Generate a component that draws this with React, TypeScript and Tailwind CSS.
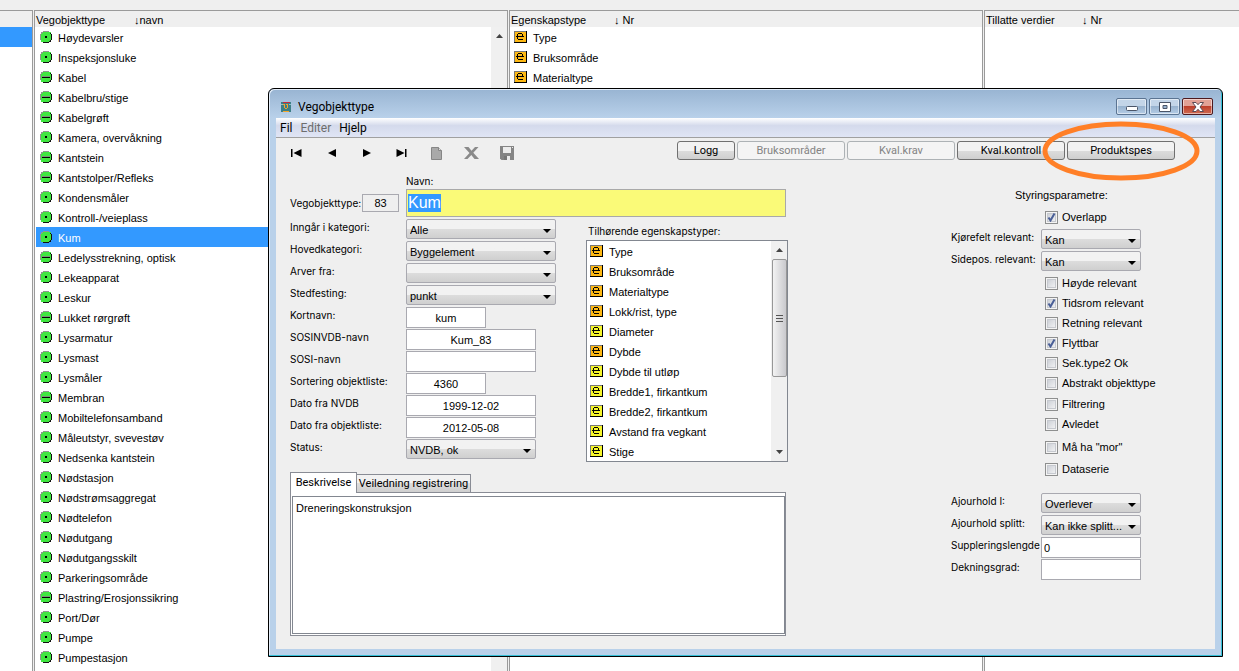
import { useEffect, useRef } from 'react'
import type { ReactNode } from 'react'

type ObjectKind = 'point' | 'line'

const objectTypes: { name: string; kind: ObjectKind }[] = [
  { name: 'Høydevarsler', kind: 'point' },
  { name: 'Inspeksjonsluke', kind: 'point' },
  { name: 'Kabel', kind: 'line' },
  { name: 'Kabelbru/stige', kind: 'line' },
  { name: 'Kabelgrøft', kind: 'line' },
  { name: 'Kamera, overvåkning', kind: 'point' },
  { name: 'Kantstein', kind: 'line' },
  { name: 'Kantstolper/Refleks', kind: 'line' },
  { name: 'Kondensmåler', kind: 'point' },
  { name: 'Kontroll-/veieplass', kind: 'point' },
  { name: 'Kum', kind: 'point' },
  { name: 'Ledelysstrekning, optisk', kind: 'line' },
  { name: 'Lekeapparat', kind: 'point' },
  { name: 'Leskur', kind: 'point' },
  { name: 'Lukket rørgrøft', kind: 'line' },
  { name: 'Lysarmatur', kind: 'point' },
  { name: 'Lysmast', kind: 'point' },
  { name: 'Lysmåler', kind: 'point' },
  { name: 'Membran', kind: 'line' },
  { name: 'Mobiltelefonsamband', kind: 'point' },
  { name: 'Måleutstyr, svevestøv', kind: 'point' },
  { name: 'Nedsenka kantstein', kind: 'point' },
  { name: 'Nødstasjon', kind: 'point' },
  { name: 'Nødstrømsaggregat', kind: 'point' },
  { name: 'Nødtelefon', kind: 'point' },
  { name: 'Nødutgang', kind: 'point' },
  { name: 'Nødutgangsskilt', kind: 'point' },
  { name: 'Parkeringsområde', kind: 'point' },
  { name: 'Plastring/Erosjonssikring', kind: 'line' },
  { name: 'Port/Dør', kind: 'point' },
  { name: 'Pumpe', kind: 'point' },
  { name: 'Pumpestasjon', kind: 'point' },
]

const properties = [
  { name: 'Type', color: '#fdb813' },
  { name: 'Bruksområde', color: '#fdb813' },
  { name: 'Materialtype', color: '#fdb813' },
  { name: 'Lokk/rist, type', color: '#fdb813' },
  { name: 'Diameter', color: '#f5f52a' },
  { name: 'Dybde', color: '#fdb813' },
  { name: 'Dybde til utløp', color: '#f5f52a' },
  { name: 'Bredde1, firkantkum', color: '#f5f52a' },
  { name: 'Bredde2, firkantkum', color: '#f5f52a' },
  { name: 'Avstand fra vegkant', color: '#f5f52a' },
  { name: 'Stige', color: '#f5f52a' },
]

function KindIcon({ kind }: { kind: ObjectKind }) {
  return (
    <svg width="12" height="12" viewBox="0 0 12 12" shapeRendering="crispEdges">
      <path d="M3 0h6v1h2v2h1v6h-1v2H9v1H3v-1H1V9H0V3h1V1h2z" fill="#3fe63f" />
      <path d="M3 0h6v1H3zM1 1h2v1H1zM1 2h1v1H1zM0 3h1v6H0z" fill="#8f968f" />
      <path d="M10 2h1v1h-1zM11 3h1v6h-1zM10 9h1v2h-1zM9 10h1v1H9zM3 11h6v1H3z" fill="#111" />
      {kind === 'point' ? (
        <path d="M5 5h2v2H5z" fill="#000" />
      ) : (
        <>
          <path d="M2 5h8v1H2z" fill="#7d8f7d" />
          <path d="M2 6h8v1H2z" fill="#000" />
        </>
      )}
    </svg>
  )
}

function PropertyIcon({ color }: { color: string }) {
  return (
    <svg width="13" height="12" viewBox="0 0 13 12" shapeRendering="crispEdges">
      <path d="M0 0h13v12H0z" fill="#777" />
      <path d="M12 0h1v12H0v-1h12z" fill="#000" />
      <path d="M1 1h11v10H1z" fill={color} />
      <path d="M4 2h4v1H4zM3 3h1v5H3zM8 3h1v2H8zM2 5h8v1H2zM4 8h5v1H4z" fill="#000" />
    </svg>
  )
}

function PropertyList({ items }: { items: typeof properties }) {
  return (
    <ul className="min-w-0 flex-1">
      {items.map((item) => (
        <li key={item.name} className="flex h-5 items-center gap-1.5 pl-[3px] leading-4">
          <PropertyIcon color={item.color} />
          <span className="pt-0.5">{item.name}</span>
        </li>
      ))}
    </ul>
  )
}

function ListColumn({ title, titleWidth, sort, edge = 'border-x', children }: {
  title: string
  titleWidth: string
  sort: string
  edge?: string
  children?: ReactNode
}) {
  return (
    <section className={`${edge} flex min-w-0 flex-col border-t border-[#9a9a9a] bg-white`}>
      <h2 className="flex h-4 bg-[#efefef] pl-px leading-[18px] whitespace-nowrap">
        <span className={titleWidth}>{title}</span>
        <span>{sort}</span>
      </h2>
      {children}
    </section>
  )
}

function ArrowUp() {
  return (
    <svg width="7" height="4" viewBox="0 0 7 4">
      <path d="M3.500 0L7 4H0z" fill="#444" />
    </svg>
  )
}

function Field({ id, label, labelWidth, children }: {
  id: string
  label: string
  labelWidth: string
  children: ReactNode
}) {
  return (
    <div className="flex h-[22px] items-start">
      <label
        htmlFor={id}
        className={`${labelWidth} shrink-0 font-[Inter,sans-serif] text-[10px] leading-4 whitespace-nowrap`}
      >
        {label}
      </label>
      {children}
    </div>
  )
}

function Select({ id, value, width }: { id: string; value: string; width: string }) {
  return (
    <span className={`${width} grid items-center`}>
      <select
        id={id}
        defaultValue={value}
        className="col-start-1 row-start-1 h-5 w-full appearance-none rounded-[2px] border border-[#a9a9b0] bg-linear-to-b from-[#f2f2f2] from-50% via-[#dddddd] via-50% to-[#cfcfcf] pt-0.5 pr-4 pl-[3px] leading-4 outline-none"
      >
        <option>{value}</option>
      </select>
      <svg
        className="pointer-events-none col-start-1 row-start-1 mt-1 mr-[5px] justify-self-end"
        width="8"
        height="4"
        viewBox="0 0 8 4"
      >
        <path d="M0 0h8L4 4z" fill="#000" />
      </svg>
    </span>
  )
}

function TextField({ id, value, className }: { id: string; value: string; className: string }) {
  return (
    <input
      id={id}
      type="text"
      defaultValue={value}
      className={`${className} h-[21px] border border-[#a9a9b0] bg-white px-0.5 outline-none`}
    />
  )
}

function CheckRow({ label, checked = false, height = 'h-5' }: { label: string; checked?: boolean; height?: string }) {
  return (
    <label className={`${height} ml-[94px] flex items-center gap-1 whitespace-nowrap`}>
      <span className="grid place-items-center">
        <input
          type="checkbox"
          defaultChecked={checked}
          className="peer col-start-1 row-start-1 size-[13px] appearance-none border border-[#8e8f8f] bg-linear-to-br from-[#c4c8d0] to-[#fafafa] shadow-[inset_0_0_0_1px_#f4f4f4,inset_0_0_0_2px_#c6c9cf]"
        />
        <svg
          className="pointer-events-none col-start-1 row-start-1 hidden peer-checked:block"
          width="9"
          height="9"
          viewBox="0 0 9 9"
        >
          <path d="M1.500 4.500L3.500 7.500L7.500 0.500" fill="none" stroke="#4a5f97" strokeWidth="2" />
        </svg>
      </span>
      <span>{label}</span>
    </label>
  )
}

function ToolButton({ label, children }: { label: string; children: ReactNode }) {
  return (
    <button type="button" aria-label={label} className="flex h-6 w-[35px] items-center justify-center">
      {children}
    </button>
  )
}

const buttonBase = 'h-[19px] rounded-[3px] border font-[Roboto,sans-serif] text-[11px] leading-4'
const buttonOn = 'border-[#707070] bg-linear-to-b from-[#f2f2f2] from-50% via-[#dddddd] via-50% to-[#cfcfcf]'
const buttonOff = 'border-[#adb2b5] bg-[#f4f4f4] text-[#838383]'

function TitleBar() {
  const frame = 'flex h-[17px] w-[31px] items-center justify-center rounded-[2px] border shadow-[inset_0_0_0_1px_rgba(255,255,255,0.5)]'
  const blue = 'border-[#5b7492] bg-linear-to-b from-[#c3d5e8] from-50% via-[#98b3cf] via-50% to-[#b5cde6]'
  return (
    <header className="flex h-[29px] items-start justify-between pr-0.5 pl-[5px]">
      <div className="flex items-center gap-[7px] pt-2">
        <svg width="10" height="10" viewBox="0 0 10 10" shapeRendering="crispEdges">
          <path d="M0 0h10v10H0z" fill="#3d7f86" />
          <path d="M2 0h7v1H2z" fill="#c8283c" />
          <path d="M0 2h2v1H0zM8 2h2v1H8z" fill="#8fc0ca" />
          <path d="M2 2h2v1H2zM3 3h1v3H3zM4 6h2v1H4zM6 3h1v3H6zM5 2h2v1H5zM2 9h6v1H2z" fill="#f5a52a" />
        </svg>
        <h1 className="font-[Roboto,sans-serif] text-xs leading-5">Vegobjekttype</h1>
      </div>
      <div className="flex gap-0.5 pt-[9px]">
        <button type="button" aria-label="Minimer" className={`${frame} ${blue}`}>
          <svg width="12" height="11" viewBox="0 0 12 11">
            <rect x="0.500" y="5.500" width="11" height="4" rx="1" fill="#fff" stroke="#4a5568" />
          </svg>
        </button>
        <button type="button" aria-label="Maksimer" className={`${frame} ${blue}`}>
          <svg width="12" height="10" viewBox="0 0 12 10">
            <path d="M.5.500h11v9H.500zM4 3.500h4v3H4z" fill="#fff" fillRule="evenodd" stroke="#4a5568" />
          </svg>
        </button>
        <button
          type="button"
          aria-label="Lukk"
          className={`${frame} border-[#4d1a1f] bg-linear-to-b from-[#e2a196] from-45% via-[#bc3a28] via-45% to-[#d06a50]`}
        >
          <svg width="12" height="10" viewBox="0 0 12 10">
            <path
              d="M.5.500h3.500L6 2.700L8 .5h3.500L8 5l3.500 4.500H8L6 7.300L4 9.500H.5L4 5z"
              fill="#fff"
              stroke="#5a4a55"
            />
          </svg>
        </button>
      </div>
    </header>
  )
}

function Toolbar() {
  return (
    <div className="flex items-start justify-between pt-[3px] pr-10 pl-[3px]">
      <div className="flex">
        <ToolButton label="Første">
          <svg width="11" height="8" viewBox="0 0 11 8">
            <path d="M0 0h1.500v8H0zM10.500 0v8L2.500 4z" />
          </svg>
        </ToolButton>
        <ToolButton label="Forrige">
          <svg width="8" height="8" viewBox="0 0 8 8">
            <path d="M8 0v8L0 4z" />
          </svg>
        </ToolButton>
        <ToolButton label="Neste">
          <svg width="8" height="8" viewBox="0 0 8 8">
            <path d="M0 0v8l8-4z" />
          </svg>
        </ToolButton>
        <ToolButton label="Siste">
          <svg width="11" height="8" viewBox="0 0 11 8">
            <path d="M9 0h1.500v8H9zM.5 0v8l8-4z" />
          </svg>
        </ToolButton>
        <ToolButton label="Ny">
          <svg width="11" height="13" viewBox="0 0 11 13">
            <path d="M.5.500h7l3 3v9H.500z" fill="#a9a9a9" stroke="#868686" />
            <path d="M7.500.5v3h3" fill="#ddd" stroke="#868686" />
          </svg>
        </ToolButton>
        <ToolButton label="Slett">
          <svg width="15" height="12" viewBox="0 0 15 12">
            <path d="M0 0h4.500l3 3.700L11 0h3.500L9.300 5.700L15 12h-4.500L7.300 8L3.500 12H0l5.500-6z" fill="#8a8a8a" />
          </svg>
        </ToolButton>
        <ToolButton label="Lagre">
          <svg width="14" height="14" viewBox="0 0 14 14">
            <path d="M0 0h14v14H1.500L0 12.500z" fill="#858585" />
            <path d="M3 1h8v6H3zM4 10h6v4H4z" fill="#ececec" />
            <path d="M4 10h3v4H4z" fill="#777" />
            <path d="M12 1h1v1h-1z" fill="#ececec" />
          </svg>
        </ToolButton>
      </div>
      <div className="flex gap-0.5">
        <button type="button" className={`${buttonBase} ${buttonOn} w-[58px]`}>Logg</button>
        <button type="button" disabled className={`${buttonBase} ${buttonOff} w-[108px]`}>Bruksområder</button>
        <button type="button" disabled className={`${buttonBase} ${buttonOff} w-[108px]`}>Kval.krav</button>
        <button type="button" className={`${buttonBase} ${buttonOn} w-[108px]`}>Kval.kontroll</button>
        <div className="relative flex">
          <button type="button" className={`${buttonBase} ${buttonOn} w-[108px]`}>Produktspes</button>
          <svg
            className="pointer-events-none absolute top-1/2 left-1/2 max-w-none -translate-1/2"
            width="158"
            height="60"
            viewBox="0 0 158 60"
          >
            <ellipse cx="79" cy="30" rx="76" ry="27" fill="none" stroke="#ff7f27" strokeWidth="5" />
          </svg>
        </div>
      </div>
    </div>
  )
}

function ObjectForm() {
  const nameRef = useRef<HTMLInputElement>(null)

  useEffect(() => {
    nameRef.current?.focus()
    nameRef.current?.select()
  }, [])

  const label = 'w-[116px]'

  return (
    <div className="w-[498px] shrink-0 pt-2">
      <label htmlFor="navn" className="ml-[116px] block font-[Inter,sans-serif] text-[10px] leading-4">
        Navn:
      </label>
      <div className="flex h-7 items-center pr-0.5">
        <label htmlFor="nummer" className="w-[72px] font-[Inter,sans-serif] text-[10px] whitespace-nowrap">
          Vegobjekttype:
        </label>
        <input
          id="nummer"
          type="text"
          readOnly
          defaultValue="83"
          className="mr-[7px] h-[18px] w-[37px] border border-[#a9a9b0] text-center"
        />
        <input
          id="navn"
          ref={nameRef}
          type="text"
          defaultValue="Kum"
          className="h-7 min-w-0 flex-1 border border-[#a9a9a9] bg-[#fafa78] px-px text-base leading-6 outline-none selection:bg-[#3399ff] selection:text-white"
        />
      </div>

      <div className="mt-0.5 flex justify-between">
        <div>
          <Field id="kategori" label="Inngår i kategori:" labelWidth={label}>
            <Select id="kategori" value="Alle" width="w-[150px]" />
          </Field>
          <Field id="hoved" label="Hovedkategori:" labelWidth={label}>
            <Select id="hoved" value="Byggelement" width="w-[150px]" />
          </Field>
          <Field id="arver" label="Arver fra:" labelWidth={label}>
            <Select id="arver" value="" width="w-[150px]" />
          </Field>
          <Field id="sted" label="Stedfesting:" labelWidth={label}>
            <Select id="sted" value="punkt" width="w-[150px]" />
          </Field>
          <Field id="kort" label="Kortnavn:" labelWidth={label}>
            <TextField id="kort" value="kum" className="w-20 text-center" />
          </Field>
          <Field id="sosinvdb" label="SOSINVDB-navn" labelWidth={label}>
            <TextField id="sosinvdb" value="Kum_83" className="w-[130px] text-center" />
          </Field>
          <Field id="sosi" label="SOSI-navn" labelWidth={label}>
            <TextField id="sosi" value="" className="w-[130px] text-center" />
          </Field>
          <Field id="sortering" label="Sortering objektliste:" labelWidth={label}>
            <TextField id="sortering" value="4360" className="w-20 text-center" />
          </Field>
          <Field id="nvdb" label="Dato fra NVDB" labelWidth={label}>
            <TextField id="nvdb" value="1999-12-02" className="w-[130px] text-center" />
          </Field>
          <Field id="dato" label="Dato fra objektliste:" labelWidth={label}>
            <TextField id="dato" value="2012-05-08" className="w-[130px] text-center" />
          </Field>
          <Field id="status" label="Status:" labelWidth={label}>
            <Select id="status" value="NVDB, ok" width="w-[130px]" />
          </Field>
        </div>

        <div className="w-[202px]">
          <h2 className="pt-1 pb-px pl-0.5 font-[Inter,sans-serif] text-[10px] leading-4">
            Tilhørende egenskapstyper:
          </h2>
          <div className="flex border border-[#828790] bg-white">
            <PropertyList items={properties} />
            <div className="flex w-4 flex-col items-center bg-[#f0f0f0]">
              <div className="flex h-[18px] items-center">
                <ArrowUp />
              </div>
              <div className="flex h-[118px] w-[15px] flex-col items-center justify-center gap-0.5 rounded-[2px] border border-[#979797] bg-linear-to-r from-[#f3f3f3] to-[#c9c9cd]">
                <div className="h-px w-[7px] bg-[#555]" />
                <div className="h-px w-[7px] bg-[#555]" />
                <div className="h-px w-[7px] bg-[#555]" />
              </div>
              <div className="mt-auto flex h-[18px] rotate-180 items-center">
                <ArrowUp />
              </div>
            </div>
          </div>
        </div>
      </div>

      <div className="mt-2.5 mr-0.5">
        <div role="tablist" className="flex items-end font-[Roboto,sans-serif] text-[11px] leading-4">
          <button
            type="button"
            role="tab"
            aria-selected="true"
            className="relative z-10 -mb-px h-[21px] w-[67px] border border-b-0 border-[#898c95] bg-white"
          >
            Beskrivelse
          </button>
          <button
            type="button"
            role="tab"
            aria-selected="false"
            className="h-[18px] w-[114px] border border-b-0 border-l-0 border-[#898c95] bg-linear-to-b from-[#f2f2f2] from-50% via-[#dddddd] via-50% to-[#cfcfcf] whitespace-nowrap"
          >
            Veiledning registrering
          </button>
        </div>
        <div className="border border-[#898c95] bg-white pt-[3px] pb-px pl-px">
          <textarea
            aria-label="Beskrivelse"
            defaultValue="Dreneringskonstruksjon"
            className="block h-[138px] w-full resize-none border border-[#828790] px-[3px] py-[3px] leading-4 outline-none"
          />
        </div>
      </div>
    </div>
  )
}

function ControlParameters() {
  const label = 'w-[90px]'
  return (
    <div className="w-[224px] shrink-0 pt-[22px]">
      <h2 className="ml-16 leading-4">Styringsparametre:</h2>
      <div className="mt-1 mb-0.5">
        <CheckRow label="Overlapp" checked />
      </div>
      <Field id="kjorefelt" label="Kjørefelt relevant:" labelWidth={label}>
        <Select id="kjorefelt" value="Kan" width="w-[100px]" />
      </Field>
      <Field id="sidepos" label="Sidepos. relevant:" labelWidth={label}>
        <Select id="sidepos" value="Kan" width="w-[100px]" />
      </Field>
      <CheckRow label="Høyde relevant" />
      <CheckRow label="Tidsrom relevant" checked />
      <CheckRow label="Retning relevant" />
      <CheckRow label="Flyttbar" checked />
      <CheckRow label="Sek.type2 Ok" />
      <CheckRow label="Abstrakt objekttype" />
      <div className="mt-px mb-0.5">
        <CheckRow label="Filtrering" />
        <CheckRow label="Avledet" />
      </div>
      <CheckRow label={'Må ha "mor"'} height="h-[22px]" />
      <CheckRow label="Dataserie" height="h-[22px]" />
      <div className="mt-[13px]">
        <Field id="ajour1" label="Ajourhold I:" labelWidth={label}>
          <Select id="ajour1" value="Overlever" width="w-[100px]" />
        </Field>
        <Field id="ajour2" label="Ajourhold splitt:" labelWidth={label}>
          <Select id="ajour2" value="Kan ikke splitt..." width="w-[100px]" />
        </Field>
        <Field id="supplering" label="Suppleringslengde" labelWidth={label}>
          <TextField id="supplering" value="0" className="w-[100px]" />
        </Field>
        <Field id="dekning" label="Dekningsgrad:" labelWidth={label}>
          <TextField id="dekning" value="" className="w-[100px]" />
        </Field>
      </div>
    </div>
  )
}

export default function App() {
  return (
    <div className="relative flex min-h-screen flex-col bg-[#efefef] pt-2.5 font-[Liberation_Sans,Arial,sans-serif] text-[11px] text-black">
      <main className="grid flex-1 grid-cols-[33px_474fr_474fr_255fr] gap-px">
        <div className="border-t border-r border-[#9a9a9a] bg-white">
          <div className="h-4 bg-[#efefef]" />
          <div className="h-5 bg-[#3399ff]" />
        </div>

        <ListColumn title="Vegobjekttype" titleWidth="w-[98px]" sort="↓navn">
          <div className="flex flex-1">
            <ul className="flex-1 pl-px">
              {objectTypes.map((item) => (
                <li
                  key={item.name}
                  className={`flex h-5 items-center gap-1.5 pl-1 leading-4 ${
                    item.name === 'Kum' ? 'bg-[#3399ff] text-white' : ''
                  }`}
                >
                  <KindIcon kind={item.kind} />
                  <span className="pt-0.5">{item.name}</span>
                </li>
              ))}
            </ul>
            <div className="flex w-4 justify-center bg-[#f0f0f0] pt-[7px]">
              <ArrowUp />
            </div>
          </div>
        </ListColumn>

        <ListColumn title="Egenskapstype" titleWidth="w-[103px]" sort="↓ Nr">
          <div className="flex pl-px">
            <PropertyList items={properties.slice(0, 3)} />
          </div>
        </ListColumn>

        <ListColumn title="Tillatte verdier" titleWidth="w-24" sort="↓ Nr" edge="border-l" />
      </main>

      <div
        role="dialog"
        aria-label="Vegobjekttype"
        className="absolute top-[88px] right-4 left-[268px] rounded-t-md border border-black bg-[#b9d1ea] bg-linear-to-b from-[#98b4d2] to-[#b9d1ea] to-[29px] px-[7px] pb-[7px] shadow-[inset_-1px_-1px_0_#35c0d8,inset_1px_1px_0_#e4eefa]"
      >
        <TitleBar />
        <div className="bg-[#efefef] pb-[13px]">
          <nav className="flex h-5 items-center gap-2 border-b border-[#a0a0a0] bg-linear-to-b from-white via-[#d4daec] via-40% to-[#e0e5f5] pl-1 font-[Roboto,sans-serif] text-xs leading-5">
            <button type="button">Fil</button>
            <button type="button" disabled className="text-[#6d6d6d]">Editer</button>
            <button type="button">Hjelp</button>
          </nav>
          <Toolbar />
          <div className="flex justify-between pr-10 pl-3.5">
            <ObjectForm />
            <ControlParameters />
          </div>
        </div>
      </div>
    </div>
  )
}
